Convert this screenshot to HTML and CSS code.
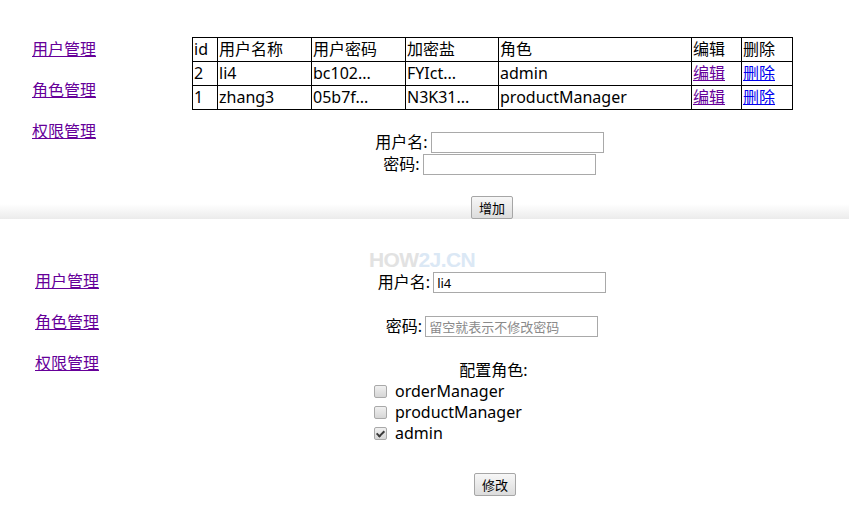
FILE: index.html
```html
<!DOCTYPE html>
<html>
<head>
<meta charset="utf-8">
<link rel="stylesheet" href="styles.css">
</head>
<body>
<section class="pane pane-top">
  <nav class="nav nav-top">
    <a class="visited" href="#">用户管理</a>
    <a class="visited" href="#">角色管理</a>
    <a class="visited" href="#">权限管理</a>
  </nav>
  <div class="content">
    <table class="grid">
      <colgroup>
        <col class="c-id"><col class="c-name"><col class="c-pwd"><col class="c-salt"><col class="c-role"><col class="c-edit"><col class="c-del">
      </colgroup>
      <tr><td>id</td><td>用户名称</td><td>用户密码</td><td>加密盐</td><td>角色</td><td>编辑</td><td>删除</td></tr>
      <tr><td>2</td><td>li4</td><td>bc102...</td><td>FYIct...</td><td>admin</td><td><a class="visited" href="#">编辑</a></td><td><a class="link" href="#">删除</a></td></tr>
      <tr><td>1</td><td>zhang3</td><td>05b7f...</td><td>N3K31...</td><td>productManager</td><td><a class="visited" href="#">编辑</a></td><td><a class="link" href="#">删除</a></td></tr>
    </table>
    <div class="row row-first"><span class="lbl">用户名:</span><input class="field" type="text"></div>
    <div class="row"><span class="lbl">密码:</span><input class="field" type="password"></div>
    <div class="row row-btn"><button class="btn">增加</button></div>
  </div>
</section>
<section class="pane pane-bottom">
  <div class="watermark"><span class="wm-gray">HOW</span><span class="wm-blue">2J.CN</span></div>
  <nav class="nav nav-bottom">
    <a class="visited" href="#">用户管理</a>
    <a class="visited" href="#">角色管理</a>
    <a class="visited" href="#">权限管理</a>
  </nav>
  <div class="content">
    <div class="row row-user"><span class="lbl">用户名:</span><input class="field" type="text" value="li4"></div>
    <div class="row row-pwd"><span class="lbl">密码:</span><input class="field" type="password" placeholder="留空就表示不修改密码"></div>
    <div class="roles-title">配置角色:</div>
    <div class="roles">
      <label class="role"><input class="cb" type="checkbox"><span>orderManager</span></label>
      <label class="role"><input class="cb" type="checkbox"><span>productManager</span></label>
      <label class="role"><input class="cb" type="checkbox" checked><span>admin</span></label>
    </div>
    <div class="row row-submit"><button class="btn">修改</button></div>
  </div>
</section>
</body>
</html>
```
FILE: styles.css
```css
* { box-sizing: border-box; }
html, body { margin: 0; padding: 0; background: #fff; }
body {
  font-family: "Noto Sans", "Noto Sans CJK SC", sans-serif;
  font-size: 16px;
  color: #000;
  width: 849px;
  height: 530px;
  overflow: hidden;
}
.pane { display: flex; position: relative; }
.pane-top {
  height: 219px;
  overflow: hidden;
  background: linear-gradient(to bottom, #fff 0, #fff 204px, #ebebeb 219px);
}
.pane-bottom { height: 311px; }
.nav { width: 192px; display: flex; flex-direction: column; align-items: flex-start; gap: 20px; }
.nav a { line-height: 21px; font-size: 16px; font-family: "Noto Sans CJK SC", sans-serif; }
.nav-top { padding: 38px 0 0 32px; }
.nav-bottom { padding: 51px 0 0 35px; }
a.visited { color: #660099; text-decoration: underline; }
a.link { color: #0000ee; text-decoration: underline; }
.content { width: 600px; display: flex; flex-direction: column; align-items: center; }
.pane-top .content { padding-top: 37px; }
.grid { border-collapse: collapse; width: 600px; table-layout: fixed; align-self: stretch; }
.grid td { border: 1px solid #000; padding: 0 1px; line-height: 23px; height: 24px; white-space: nowrap; overflow: hidden; }
.c-id { width: 25px; }
.c-name { width: 94px; }
.c-pwd { width: 94px; }
.c-salt { width: 93px; }
.c-role { width: 193px; }
.c-edit { width: 50px; }
.c-del { width: 51px; }
.row { display: flex; align-items: center; justify-content: center; height: 23px; gap: 3px; }
.pane-top .row { margin-right: 5px; }
.row-first { margin-top: 21px; }
.row-btn { margin-top: 20px; }
.pane-top .row-btn { margin-right: 0; }
.lbl { line-height: 21px; }
.field {
  width: 173px; height: 21px; border: 1px solid #a9a9a9; padding: 1px 3px;
  font-family: "Noto Sans", "Noto Sans CJK SC", sans-serif; font-size: 13px; color: #000;
  outline: none; background: #fff;
}
.field::placeholder { color: #8a8a8a; }
.btn {
  width: 42px; height: 23px; padding: 0; font-size: 13px;
  font-family: "Noto Sans CJK SC", sans-serif; color: #000;
  border: 1px solid #a6a6a6; border-radius: 2px;
  background: linear-gradient(to bottom, #f7f7f7, #dcdcdc);
}
.pane-bottom .content { padding-top: 52px; }
.row-pwd { margin-top: 21px; }
.roles-title { margin-top: 22px; line-height: 21px; margin-left: 3px; }
.roles { width: 236px; display: flex; flex-direction: column; align-items: flex-start; }
.role { display: flex; align-items: center; height: 21px; gap: 8px; line-height: 21px; }
.cb {
  appearance: none; -webkit-appearance: none; margin: 0;
  width: 13px; height: 13px; border: 1px solid #a9a9a9; border-radius: 2px;
  background: linear-gradient(to bottom, #f0f0f0, #d6d6d6);
  position: relative;
}
.cb:checked::after {
  content: ""; position: absolute; left: 3px; top: 1px; width: 3px; height: 6px;
  border: solid #3a3a3a; border-width: 0 2px 2px 0; transform: rotate(45deg);
}
.row-submit { margin-top: 29px; margin-left: 6px; }
.watermark {
  position: absolute; left: 369px; top: 32px;
  font-family: "Liberation Sans", sans-serif; font-weight: bold; font-size: 21px;
  letter-spacing: -0.6px; line-height: 17px;
}
.wm-gray { color: #e2e2e2; }
.wm-blue { color: #dbe8f5; }
```
